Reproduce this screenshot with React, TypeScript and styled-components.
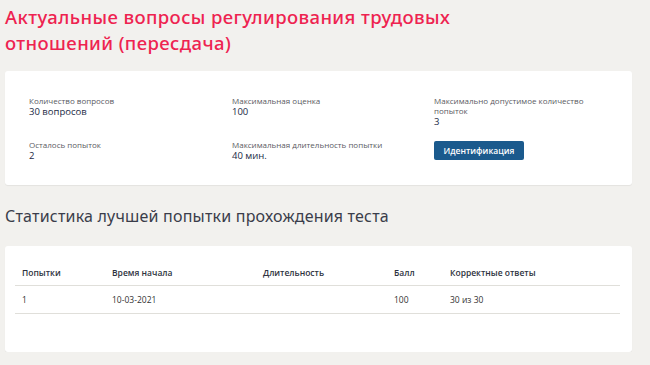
import React from "react";
import styled, { createGlobalStyle } from "styled-components";

const Global = createGlobalStyle`
  html, body { margin: 0; padding: 0; background: #f2f1ee; }
  body { font-family: "Open Sans", "Noto Sans", sans-serif; }
  * { box-sizing: border-box; }
`;

const Page = styled.div`
  padding: 4px 18px 0 5px;
  width: 650px;
`;

const Title = styled.h1`
  margin: 0;
  font-family: "Noto Sans", "Open Sans", sans-serif;
  font-weight: 500;
  font-size: 18.5px;
  line-height: 25.5px;
  color: #ee2350;
  letter-spacing: 0.4px;
`;

const Card = styled.div<{ $mt: number; $pad: string }>`
  margin-top: ${(p) => p.$mt}px;
  background: #ffffff;
  border-radius: 3px;
  box-shadow: 0 1px 1px rgba(0, 0, 0, 0.06);
  padding: ${(p) => p.$pad};
`;

const InfoGrid = styled.div`
  display: grid;
  grid-template-columns: 203px 202px 175px;
  row-gap: 12px;
`;

const Item = styled.div`
  min-height: 32px;
`;

const Label = styled.div`
  font-size: 8px;
  line-height: 10px;
  color: #5a5a62;
`;

const Value = styled.div`
  font-size: 9.5px;
  line-height: 12px;
  color: #1b2a45;
`;

const Button = styled.button`
  display: block;
  margin-top: 1px;
  width: 90px;
  height: 19px;
  border: none;
  border-radius: 2px;
  background: #1b5a8d;
  color: #ffffff;
  font-family: "Open Sans", sans-serif;
  font-size: 8.5px;
  font-weight: 600;
  padding: 0;
  cursor: pointer;
`;

const Heading = styled.h2`
  margin: 21px 0 0;
  font-family: "Noto Sans", "Open Sans", sans-serif;
  font-weight: 400;
  font-size: 16px;
  line-height: 20px;
  letter-spacing: 0.2px;
  color: #3a3d4a;
`;

const Table = styled.div`
  width: 605px;
`;

const Row = styled.div<{ $header?: boolean }>`
  display: grid;
  grid-template-columns: 90px 151px 131px 56px 1fr;
  padding: 0 7px;
  height: ${(p) => (p.$header ? 40 : 28)}px;
  align-items: ${(p) => (p.$header ? "end" : "center")};
  padding-bottom: ${(p) => (p.$header ? "6px" : "0")};
  border-bottom: 1px solid #e0dfda;
  font-size: 8.5px;
  line-height: 12px;
  color: ${(p) => (p.$header ? "#2e3340" : "#333333")};
  font-weight: ${(p) => (p.$header ? 600 : 400)};
`;

const info = [
  { l: "Количество вопросов", v: "30 вопросов" },
  { l: "Максимальная оценка", v: "100" },
  { l: "Максимально допустимое количество попыток", v: "3" },
  { l: "Осталось попыток", v: "2" },
  { l: "Максимальная длительность попытки", v: "40 мин." },
];

export default function App() {
  return (
    <>
      <Global />
      <Page>
        <Title>
          Актуальные вопросы регулирования трудовых
          <br />
          отношений (пересдача)
        </Title>
        <Card $mt={16} $pad="25px 0 13px 24px">
          <InfoGrid>
            {info.map((it) => (
              <Item key={it.l}>
                <Label>{it.l}</Label>
                <Value>{it.v}</Value>
              </Item>
            ))}
            <Item>
              <Button>Идентификация</Button>
            </Item>
          </InfoGrid>
        </Card>
        <Heading>Статистика лучшей попытки прохождения теста</Heading>
        <Card $mt={20} $pad="0 0 38px 10px">
          <Table>
            <Row $header>
              <span>Попытки</span>
              <span>Время начала</span>
              <span>Длительность</span>
              <span>Балл</span>
              <span>Корректные ответы</span>
            </Row>
            <Row>
              <span>1</span>
              <span>10-03-2021</span>
              <span></span>
              <span>100</span>
              <span>30 из 30</span>
            </Row>
          </Table>
        </Card>
      </Page>
    </>
  );
}
